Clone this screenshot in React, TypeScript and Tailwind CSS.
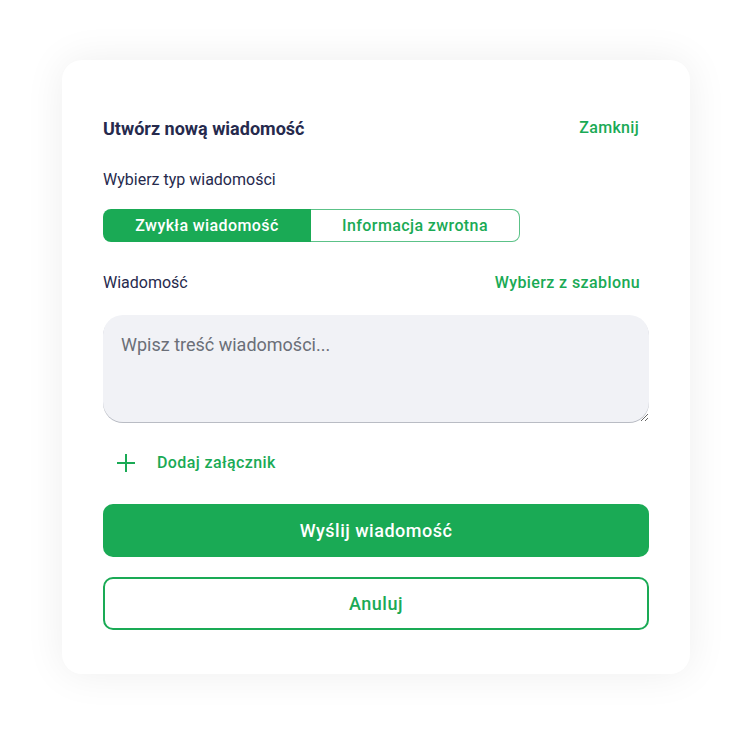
import React from "react";

export default function App() {
  return (
    <div className="w-[752px] h-[736px] bg-white flex items-start justify-center pt-[60px]" style={{ fontFamily: "Roboto, 'Noto Sans', sans-serif" }}>
      <div className="w-[628px] h-[614px] bg-white rounded-[20px] shadow-[0_0_40px_rgba(0,0,0,0.07)] px-[41px] pt-[54px] flex flex-col">
        <div className="flex items-center justify-between h-[28px]">
          <h1 className="text-[18px] font-bold text-[#262a4d]">Utwórz nową wiadomość</h1>
          <button className="text-[16px] font-medium text-[#1aaa55] tracking-[0.3px] px-[10px]">Zamknij</button>
        </div>
        <div className="mt-[28px] text-[16px] text-[#262a4d] h-[20px] leading-[20px]">Wybierz typ wiadomości</div>
        <div className="mt-[19px] flex w-[417px] h-[33px]">
          <button className="flex-1 bg-[#1aaa55] text-white text-[16px] font-medium tracking-[0.4px] rounded-l-[8px]">Zwykła wiadomość</button>
          <button className="flex-1 bg-white text-[#1aaa55] text-[16px] font-medium tracking-[0.4px] rounded-r-[8px] border border-l-0 border-solid border-[#5cc288]">Informacja zwrotna</button>
        </div>
        <div className="mt-[30px] flex items-center justify-between h-[22px]">
          <span className="text-[16px] text-[#262a4d]">Wiadomość</span>
          <button className="text-[16px] font-medium text-[#1aaa55] tracking-[0.4px] px-[9px]">Wybierz z szablonu</button>
        </div>
        <textarea
          placeholder="Wpisz treść wiadomości..."
          className="mt-[21px] h-[107px] w-full bg-[#f1f2f6] rounded-[20px] px-[18px] py-[16px] text-[18px] text-[#262a4d] placeholder:text-[#6b6f78] outline-none shadow-[0_1px_0_#b9bcc4] resize-y"
        />
        <button className="mt-[28px] flex items-center h-[26px] text-[#1aaa55]">
          <svg width="26" height="26" viewBox="0 0 26 26" className="ml-[10px]" fill="none" stroke="#1aaa55" strokeWidth="2">
            <path d="M13 4v18M4 13h18" />
          </svg>
          <span className="ml-[18px] text-[16px] font-medium tracking-[0.4px]">Dodaj załącznik</span>
        </button>
        <button className="mt-[28px] h-[53px] w-full rounded-[10px] bg-[#1aaa55] text-white text-[18px] font-medium tracking-[0.5px]">Wyślij wiadomość</button>
        <button className="mt-[20px] h-[53px] w-full rounded-[10px] border-2 border-[#1aaa55] bg-white text-[#1aaa55] text-[18px] font-medium tracking-[0.5px]">Anuluj</button>
      </div>
    </div>
  );
}
